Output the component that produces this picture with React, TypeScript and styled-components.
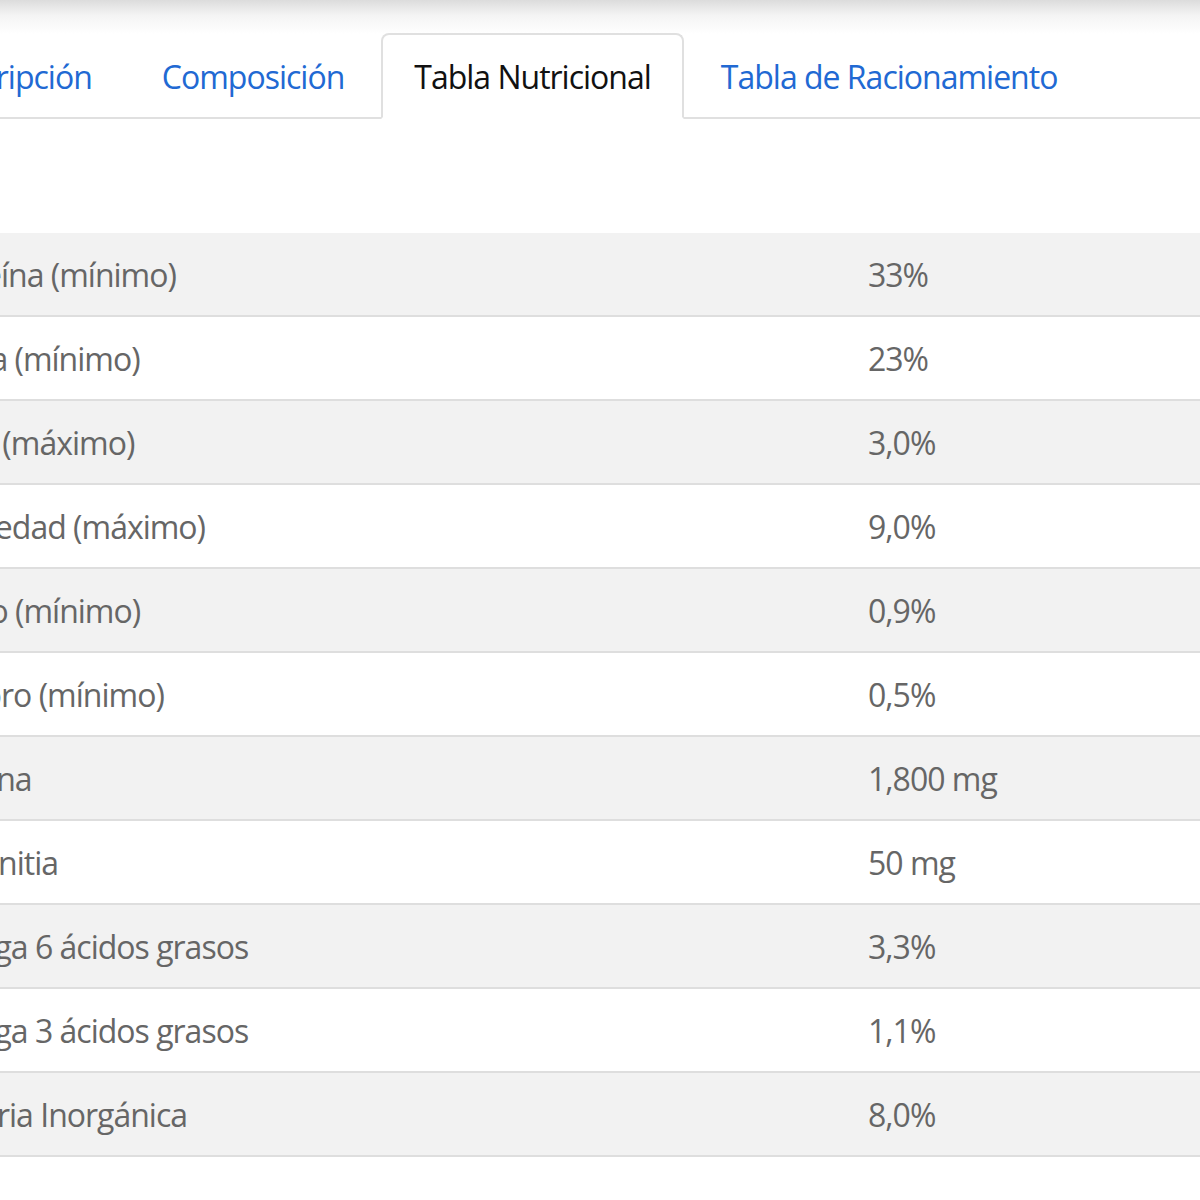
import React from 'react';
import styled, { createGlobalStyle } from 'styled-components';

const GlobalStyle = createGlobalStyle`
	html, body {
		margin: 0;
		padding: 0;
		background: #fff;
	}
	body {
		width: 1200px;
		overflow: hidden;
		font-family: 'Open Sans', 'DejaVu Sans', sans-serif;
	}
`;

const TopShade = styled.div`
	height: 34px;
	background: linear-gradient(to bottom, #dcdcdc 0%, #f4f4f4 45%, #fff 100%);
`;

const Content = styled.div`
	margin-left: -105px;
	width: 1420px;
`;

const TabList = styled.ul`
	display: flex;
	list-style: none;
	margin: -1px 0 0;
	padding: 0;
	border-bottom: 2px solid #e0e0e0;
`;

const Tab = styled.li<{ $active?: boolean }>`
	display: flex;
	align-items: center;
	height: 82px;
	padding: 0 31px;
	margin-right: 4px;
	margin-bottom: -2px;
	font-size: 32px;
	letter-spacing: -1px;
	color: ${(p) => (p.$active ? '#111' : '#2169d3')};
	background: ${(p) => (p.$active ? '#fff' : 'transparent')};
	border: 2px solid ${(p) => (p.$active ? '#e0e0e0' : 'transparent')};
	border-bottom-color: ${(p) => (p.$active ? '#fff' : 'transparent')};
	border-radius: 8px 8px 0 0;
	white-space: nowrap;
`;

const Table = styled.div`
	margin-top: 114px;
	margin-left: -2px;
`;

const Row = styled.div<{ $striped?: boolean }>`
	display: grid;
	grid-template-columns: 943px 1fr;
	height: 82px;
	align-items: center;
	background: ${(p) => (p.$striped ? '#f2f2f2' : '#fff')};
	border-bottom: 2px solid #dedede;
`;

const Label = styled.div`
	padding-left: 32px;
	font-size: 32px;
	letter-spacing: -1px;
	color: #666;
	white-space: nowrap;
`;

const Value = styled(Label)``;

const tabs = ['Descripción', 'Composición', 'Tabla Nutricional', 'Tabla de Racionamiento'];

const rows: [string, string][] = [
	['Proteína (mínimo)', '33%'],
	['Grasa (mínimo)', '23%'],
	['Fibra (máximo)', '3,0%'],
	['Humedad (máximo)', '9,0%'],
	['Calcio (mínimo)', '0,9%'],
	['Fósforo (mínimo)', '0,5%'],
	['Taurina', '1,800 mg'],
	['L-Carnitia', '50 mg'],
	['Omega 6 ácidos grasos', '3,3%'],
	['Omega 3 ácidos grasos', '1,1%'],
	['Materia Inorgánica', '8,0%'],
];

const App = () => (
	<>
		<GlobalStyle />
		<TopShade />
		<Content>
			<TabList>
				{tabs.map((t) => (
					<Tab key={t} $active={t === 'Tabla Nutricional'}>
						{t}
					</Tab>
				))}
			</TabList>
			<Table>
				{rows.map(([label, value], i) => (
					<Row key={label} $striped={i % 2 === 0}>
						<Label>{label}</Label>
						<Value>{value}</Value>
					</Row>
				))}
			</Table>
		</Content>
	</>
);

export default App;
